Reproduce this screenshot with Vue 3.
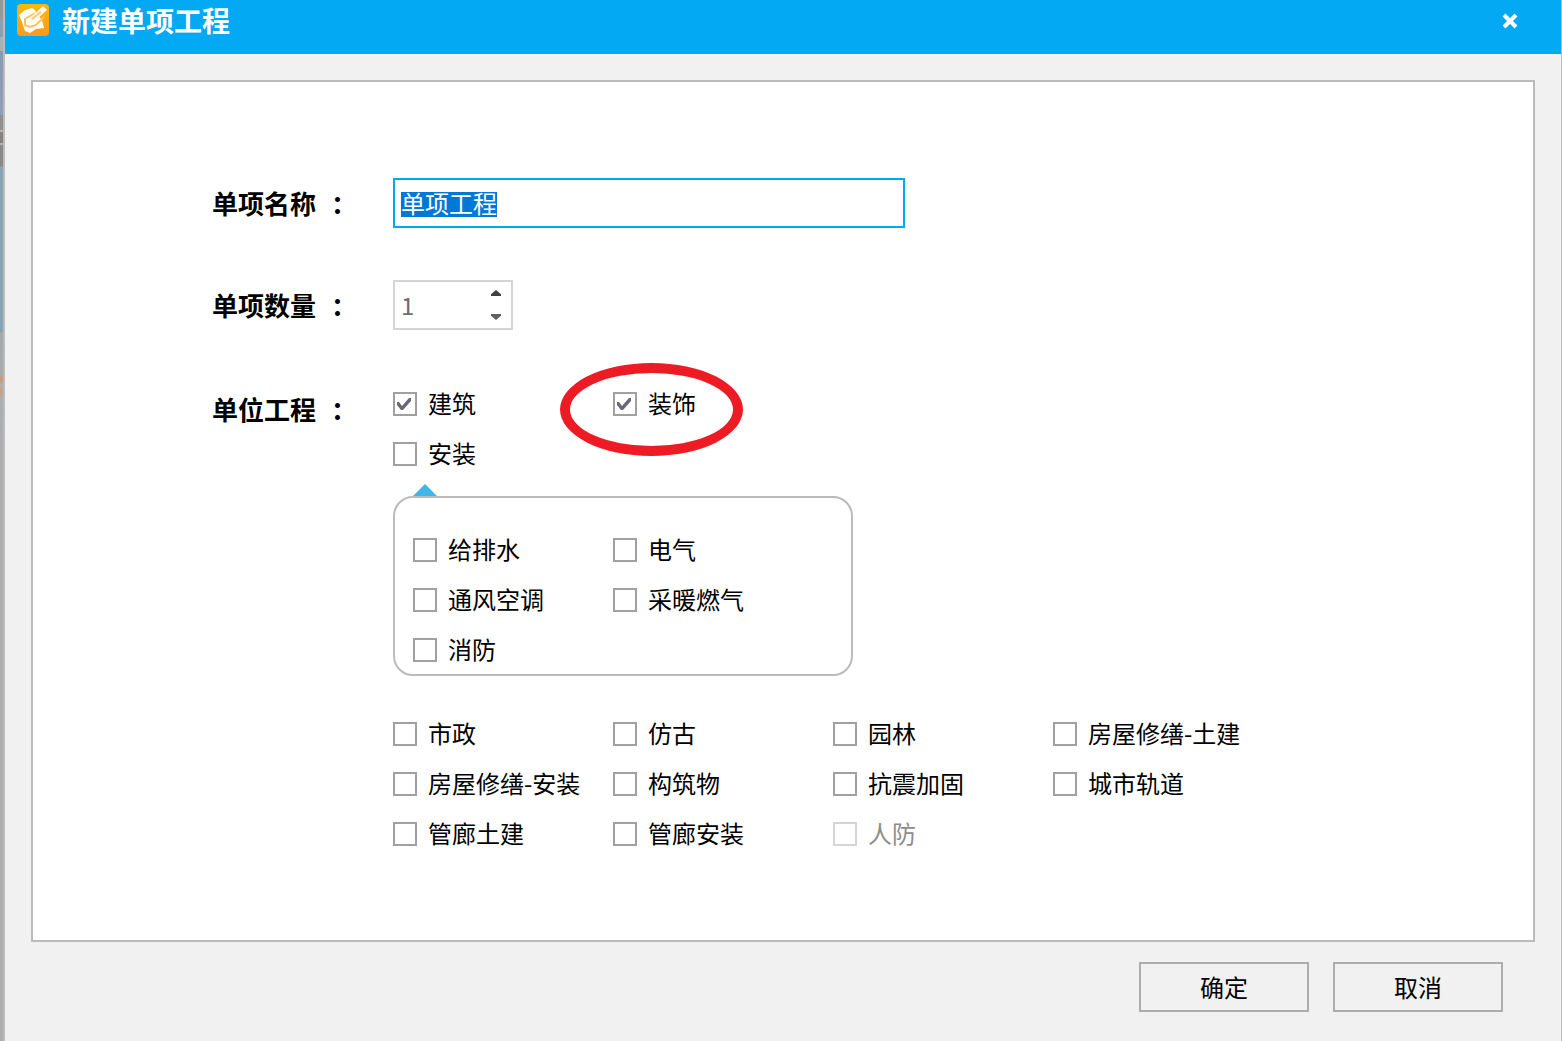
<script setup>
import { onMounted, ref } from 'vue'

const name = ref('单项工程')
const count = ref(1)
const nameInput = ref(null)

const mainUnits = ref([
  { id: 'building', label: '建筑', checked: true },
  { id: 'decoration', label: '装饰', checked: true, marked: true },
  { id: 'install', label: '安装', checked: false },
])

const installUnits = ref([
  { id: 'water', label: '给排水', checked: false },
  { id: 'electric', label: '电气', checked: false },
  { id: 'hvac', label: '通风空调', checked: false },
  { id: 'heating', label: '采暖燃气', checked: false },
  { id: 'fire', label: '消防', checked: false },
])

const otherUnits = ref([
  { id: 'municipal', label: '市政', checked: false },
  { id: 'antique', label: '仿古', checked: false },
  { id: 'garden', label: '园林', checked: false },
  { id: 'repair-civil', label: '房屋修缮-土建', checked: false },
  { id: 'repair-install', label: '房屋修缮-安装', checked: false },
  { id: 'structure', label: '构筑物', checked: false },
  { id: 'seismic', label: '抗震加固', checked: false },
  { id: 'rail', label: '城市轨道', checked: false },
  { id: 'gallery-civil', label: '管廊土建', checked: false },
  { id: 'gallery-install', label: '管廊安装', checked: false },
  { id: 'air-defence', label: '人防', checked: false, disabled: true },
])

// The highlight is one glyph cell tall and is dropped on the first edit.
const highlighted = ref(true)

onMounted(() => {
  nameInput.value.focus()
  nameInput.value.select()
})
</script>

<template>
  <div class="desktop">
    <main class="dialog">
      <header class="titlebar">
        <svg class="logo" viewBox="0 0 32 32" aria-hidden="true">
          <defs>
            <linearGradient id="logo-fill" x1="0" y1="0" x2="0" y2="1">
              <stop offset="0" stop-color="#fab808" />
              <stop offset="1" stop-color="#fb9a20" />
            </linearGradient>
          </defs>
          <rect width="32" height="32" rx="4" fill="url(#logo-fill)" />
          <path d="M2 11 L8 6 L15 4 L18 6 L19 9 L25 16 L27 24 L19 25 L13 29 L8 27 L5 18 Z" fill="#fff" />
          <path d="M18 9 L8 15 L8 21 L13 23 L19 21 L27 13" fill="none" stroke="#fbc35c" stroke-width="2" />
          <path d="M11 19 L13 14 L26 2 L30 6 L17 18 Z" fill="#fff8ea" />
          <path d="M15 15 L24 8" stroke="#fbc978" stroke-width="2" />
        </svg>
        <h1>新建单项工程</h1>
        <button class="close" type="button" aria-label="关闭">
          <svg viewBox="0 0 18 18" aria-hidden="true">
            <path d="M3 4 L15 16 M15 4 L3 16" stroke="#fff" stroke-width="4" />
          </svg>
        </button>
      </header>

      <form class="body" @submit.prevent>
        <section class="panel">
          <div class="row">
            <label class="caption" for="name"><span>单项名称</span><span>：</span></label>
            <input
              id="name"
              ref="nameInput"
              v-model="name"
              class="name"
              :class="{ highlighted }"
              type="text"
              spellcheck="false"
              @input="highlighted = false"
              @mousedown="highlighted = false"
            />
          </div>

          <div class="row">
            <label class="caption" for="count"><span>单项数量</span><span>：</span></label>
            <div class="spinner">
              <input id="count" v-model.number="count" type="number" disabled />
              <div class="steps">
                <button type="button" class="up" aria-label="增加" disabled></button>
                <button type="button" class="down" aria-label="减少" disabled></button>
              </div>
            </div>
          </div>

          <div class="row units" role="group" aria-labelledby="units-caption">
            <div id="units-caption" class="caption"><span>单位工程</span><span>：</span></div>
            <div class="choices">
              <div class="grid main">
                <label v-for="u in mainUnits" :key="u.id" class="check" :for="u.id">
                  <input :id="u.id" v-model="u.checked" type="checkbox" />
                  <span>{{ u.label }}</span>
                  <i v-if="u.marked" class="mark"></i>
                </label>
              </div>

              <div class="group">
                <div class="grid inner">
                  <label v-for="u in installUnits" :key="u.id" class="check" :for="u.id">
                    <input :id="u.id" v-model="u.checked" type="checkbox" />
                    <span>{{ u.label }}</span>
                  </label>
                </div>
              </div>

              <div class="grid">
                <label v-for="u in otherUnits" :key="u.id" class="check" :for="u.id">
                  <input :id="u.id" v-model="u.checked" type="checkbox" :disabled="u.disabled" />
                  <span>{{ u.label }}</span>
                </label>
              </div>
            </div>
          </div>
        </section>

        <footer class="actions">
          <button type="submit">确定</button>
          <button type="button">取消</button>
        </footer>
      </form>
    </main>
  </div>
</template>

<style>
body {
  margin: 0;
}
</style>

<style scoped>
* {
  box-sizing: border-box;
}

.desktop {
  display: flex;
  min-height: 100vh;
  padding-left: 3px;
  background: linear-gradient(
    #989898 19px, #8e9cb4 19px, #8e9cb4 37px, #a9b0b9 37px, #a9b0b9 51px,
    #8798b0 51px, #929fb9 115px, #928f90 115px, #928f90 130px, #b5b5b5 130px,
    #b5b5b5 132px, #85827f 132px, #85827f 143px, #b5b5b5 143px, #b5b5b5 145px,
    #8a8888 145px, #8a8888 166px, #86a4b1 167px, #86a4b1 332px, #a4a8ac 333px,
    #a8abad 375px, #c99c82 376px, #c99c82 383px, #b3b0af 384px, #b3b0af 387px,
    #c2a48e 388px, #c2a48e 395px, #aaadb1 396px, #adadad 500px
  );
  color: #000;
  font-family: "Noto Sans CJK SC", sans-serif;
  font-size: 24px;
  line-height: 24px;
}

input,
button {
  margin: 0;
  font: inherit;
  color: inherit;
}

.dialog {
  flex: 1;
  display: flex;
  flex-direction: column;
  border: solid #bbb;
  border-width: 0 1px 0 2px;
  background: #f1f1f1;
}

.titlebar {
  display: flex;
  align-items: center;
  height: 54px;
  padding: 0 42px 14px 12px;
  background: #03a9f2;
  color: #fff;
}

.logo {
  width: 32px;
  height: 32px;
}

h1 {
  flex: 1;
  margin: 0 0 0 13px;
  font-size: 28px;
  line-height: 38px;
  font-weight: 700;
}

.close {
  width: 18px;
  height: 18px;
  padding: 0;
  border: 0;
  background: none;
}

.close svg {
  display: block;
}

.body {
  flex: 1;
  display: flex;
  flex-direction: column;
  padding: 26px 26px 29px;
}

.panel {
  flex: 1;
  display: flex;
  flex-direction: column;
  gap: 52px;
  padding: 96px 0 80px 179px;
  border: 2px solid #bbb;
  background: #fff;
}

.row {
  display: flex;
  align-items: center;
}

.caption {
  display: flex;
  gap: 15px;
  width: 181px;
  font-size: 26px;
  font-weight: 700;
}

.name {
  width: 512px;
  height: 50px;
  padding: 0 6px 2px;
  border: 2px solid #00a8ee;
  outline: 0;
  background: #fff;
}

.name::selection {
  background: rgba(0, 120, 215, 0.99);
  color: #fff;
}

.name.highlighted {
  background: linear-gradient(#0078d7, #0078d7) 6px 12px / 96px 25px no-repeat #fff;
}

.name.highlighted::selection {
  background: transparent;
}

.spinner {
  display: flex;
  justify-content: space-between;
  width: 120px;
  height: 50px;
  border: 2px solid #d5d5d5;
}

.spinner input {
  width: 80px;
  padding: 0 6px 2px;
  border: 0;
  background: none;
  color: #6d6d6d;
  appearance: textfield;
}

.steps {
  display: flex;
  flex-direction: column;
  width: 30px;
}

.steps button {
  flex: 1;
  display: flex;
  justify-content: center;
  padding: 8px 0;
  border: 0;
  background: none;
}

.steps .up {
  align-items: flex-start;
}

.steps .down {
  align-items: flex-end;
}

.steps button::before {
  content: "";
  width: 10px;
  height: 6px;
  background: #404040;
  clip-path: polygon(50% 0, 100% 70%, 100% 100%, 0 100%, 0 70%);
}

.steps .down::before {
  background: #606060;
  clip-path: polygon(0 0, 100% 0, 100% 30%, 50% 100%, 0 30%);
}

.units {
  align-items: flex-start;
  padding-top: 10px;
}

.units .caption {
  padding-top: 5px;
}

.grid {
  display: grid;
  grid-template-columns: repeat(4, 220px);
  gap: 26px 0;
}

.grid.main {
  grid-template-columns: repeat(2, 220px);
}

.grid.inner {
  grid-template-columns: repeat(2, 200px);
}

.group {
  position: relative;
  width: 460px;
  margin: 30px 0 46px;
  padding: 40px 18px 12px;
  border: 2px solid #bbb;
  border-radius: 20px;
}

.group::before {
  content: "";
  position: absolute;
  left: 18px;
  bottom: 100%;
  width: 24px;
  height: 14px;
  background: #43b7e3;
  clip-path: polygon(50% 0, 100% 86%, 0 86%);
}

.check {
  position: relative;
  display: flex;
  align-items: center;
  gap: 11px;
  height: 24px;
  line-height: 22px;
  white-space: nowrap;
}

.check span {
  align-self: flex-start;
}

.check input {
  flex: none;
  width: 24px;
  height: 24px;
  border: 2px solid #a0a0a0;
  background: #fff;
  appearance: none;
}

.check input:checked::before {
  content: "";
  display: block;
  width: 20px;
  height: 20px;
  background: #666878;
  clip-path: polygon(2px 8px, 4px 8px, 7px 12px, 14px 4px, 16px 4px, 16px 7px, 8px 16px, 6px 16px, 2px 11px);
}

.check input:disabled {
  border-color: #d5d5d5;
}

.check input:disabled + span {
  color: #8c8c8c;
}

.mark {
  position: absolute;
  left: -53px;
  top: -29px;
  width: 183px;
  height: 93px;
  border: 10px solid #ed1c24;
  border-radius: 50%;
  pointer-events: none;
}

.actions {
  display: flex;
  justify-content: flex-end;
  gap: 24px;
  padding: 20px 32px 0 0;
}

.actions button {
  width: 170px;
  height: 50px;
  padding: 0;
  border: 2px solid #adadad;
  background: #f1f1f1;
}
</style>
